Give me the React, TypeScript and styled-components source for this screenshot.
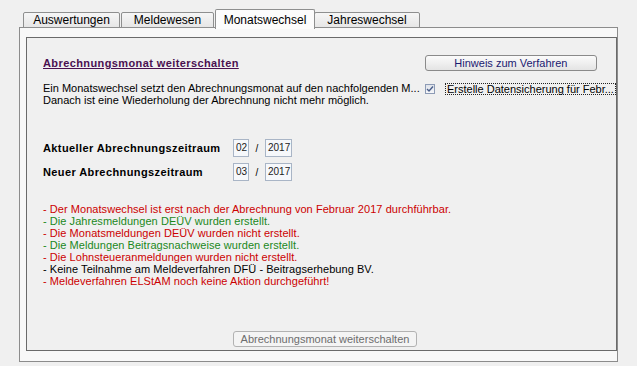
import React from "react";
import styled, { createGlobalStyle } from "styled-components";

const Global = createGlobalStyle`
  html, body { margin: 0; padding: 0; background: #f0f0f0; }
  body { font-family: "Liberation Sans", Arial, sans-serif; font-size: 11px; color: #000; }
`;

const Root = styled.div`
  width: 637px;
  height: 366px;
  box-sizing: border-box;
  padding: 10px 0 0 19px;
  background: #f0f0f0;
  overflow: hidden;
`;

const TabBar = styled.div`
  display: flex;
  align-items: flex-end;
  height: 18px;
  padding-left: 4px;
  margin-bottom: -1px;
  position: relative;
  z-index: 1;
`;

const Tab = styled.div<{ $active?: boolean; $w: number }>`
  box-sizing: border-box;
  width: ${(p) => p.$w}px;
  height: ${(p) => (p.$active ? 20 : 16)}px;
  margin: 0 ${(p) => (p.$active ? "-1px" : "1px")} ${(p) => (p.$active ? "-1px" : "0")} 0;
  border: 1px solid #8e8f8f;
  border-bottom: ${(p) => (p.$active ? "none" : "1px solid #8e8f8f")};
  border-radius: 2px 2px 0 0;
  background: ${(p) => (p.$active ? "#fcfcfc" : "linear-gradient(#f6f6f6, #e6e6e6)")};
  display: flex;
  justify-content: center;
  align-items: ${(p) => (p.$active ? "flex-start" : "center")};
  padding-top: ${(p) => (p.$active ? "3px" : "0")};
  font-size: 12px;
  color: #000;
  position: relative;
  z-index: ${(p) => (p.$active ? 2 : 1)};
`;

const Panel = styled.div`
  box-sizing: border-box;
  width: 599px;
  height: 335px;
  border: 1px solid #8c8c8c;
  background: #f8f8f8;
  padding: 9px 7px 10px 6px;
  display: flex;
`;

const Inner = styled.div`
  flex: 1;
  border: 1px solid #6a6a6a;
  background: #f0f0f0;
  display: flex;
  flex-direction: column;
  padding: 17px 0 0 16px;
  box-sizing: border-box;
`;

const HeaderRow = styled.div`
  display: flex;
  align-items: center;
  justify-content: space-between;
  padding-right: 11px;
  height: 16px;
`;

const Title = styled.span`
  font-weight: bold;
  font-size: 11px;
  letter-spacing: 0.4px;
  color: #4a1050;
  text-decoration: underline;
`;

const WinButton = styled.button<{ $w: number; $disabled?: boolean }>`
  box-sizing: border-box;
  width: ${(p) => p.$w}px;
  height: 16px;
  padding: 0;
  border: 1px solid ${(p) => (p.$disabled ? "#b2b2b2" : "#8a8a8a")};
  border-radius: 3px;
  background: ${(p) => (p.$disabled ? "#f4f4f4" : "linear-gradient(#fbfbfb, #e4e4e4)")};
  font-family: "Liberation Sans", Arial, sans-serif;
  font-size: 11px;
  color: ${(p) => (p.$disabled ? "#6d6d6d" : "#1a1a70")};
  line-height: 14px;
  text-align: center;
`;

const HeaderButton = styled(WinButton)`
  margin-right: 8px;
`;

const DescRow = styled.div`
  display: flex;
  margin-top: 11px;
`;

const DescText = styled.div`
  width: 382px;
  line-height: 12px;
  font-size: 11px;
  white-space: nowrap;
`;

const CheckWrap = styled.div`
  display: flex;
  align-items: flex-start;
  padding-top: 1px;
`;

const CheckBox = styled.span`
  box-sizing: border-box;
  width: 10px;
  height: 10px;
  margin-top: 1px;
  border: 1px solid #8d9bb5;
  background: linear-gradient(#dfe3ea, #f6f7f9);
  display: flex;
  align-items: center;
  justify-content: center;
`;

const CheckLabel = styled.span`
  margin-left: 10px;
  border: 1px dotted #222;
  padding: 0 1px;
  line-height: 10px;
  white-space: nowrap;
  font-size: 11px;
`;

const PeriodBlock = styled.div`
  display: flex;
  flex-direction: column;
  gap: 6px;
  margin-top: 33px;
`;

const PeriodRow = styled.div`
  display: flex;
  align-items: center;
  height: 18px;
`;

const PeriodLabel = styled.span`
  width: 190px;
  font-weight: bold;
  font-size: 11px;
  letter-spacing: 0.4px;
`;

const Field = styled.span<{ $w: number }>`
  box-sizing: border-box;
  width: ${(p) => p.$w}px;
  height: 18px;
  border: 1px solid #a9b5c6;
  background: #f6f8fb;
  font-size: 10px;
  line-height: 16px;
  padding-left: 2px;
  color: #222;
`;

const Slash = styled.span`
  width: 16px;
  text-align: center;
  font-size: 10px;
`;

const Messages = styled.div`
  margin-top: 22px;
  display: flex;
  flex-direction: column;
`;

const Msg = styled.div<{ $c: string }>`
  color: ${(p) => p.$c};
  font-size: 11px;
  line-height: 12px;
  letter-spacing: 0.05px;
  white-space: nowrap;
`;

const Footer = styled.div`
  margin-top: auto;
  padding: 0 0 3px 190px;
`;

const RED = "#cc0000";
const GREEN = "#1b881b";

const messages: [string, string][] = [
  ["- Der Monatswechsel ist erst nach der Abrechnung von Februar 2017 durchführbar.", RED],
  ["- Die Jahresmeldungen DEÜV wurden erstellt.", GREEN],
  ["- Die Monatsmeldungen DEÜV wurden nicht erstellt.", RED],
  ["- Die Meldungen Beitragsnachweise wurden erstellt.", GREEN],
  ["- Die Lohnsteueranmeldungen wurden nicht erstellt.", RED],
  ["- Keine Teilnahme am Meldeverfahren DFÜ - Beitragserhebung BV.", "#000"],
  ["- Meldeverfahren ELStAM noch keine Aktion durchgeführt!", RED],
];

export default function App() {
  return (
    <Root>
      <Global />
      <TabBar>
        <Tab $w={97}>Auswertungen</Tab>
        <Tab $w={93}>Meldewesen</Tab>
        <Tab $w={100} $active>Monatswechsel</Tab>
        <Tab $w={106}>Jahreswechsel</Tab>
      </TabBar>
      <Panel>
        <Inner>
          <HeaderRow>
            <Title>Abrechnungsmonat weiterschalten</Title>
            <HeaderButton $w={172}>Hinweis zum Verfahren</HeaderButton>
          </HeaderRow>
          <DescRow>
            <DescText>
              Ein Monatswechsel setzt den Abrechnungsmonat auf den nachfolgenden M...
              <br />
              Danach ist eine Wiederholung der Abrechnung nicht mehr möglich.
            </DescText>
            <CheckWrap>
              <CheckBox>
                <svg width="8" height="8" viewBox="0 0 8 8">
                  <path d="M1 4 L3 6 L7 1.5" fill="none" stroke="#4a5e8a" strokeWidth="1.4" />
                </svg>
              </CheckBox>
              <CheckLabel>Erstelle Datensicherung für Febr...</CheckLabel>
            </CheckWrap>
          </DescRow>
          <PeriodBlock>
            <PeriodRow>
              <PeriodLabel>Aktueller Abrechnungszeitraum</PeriodLabel>
              <Field $w={16}>02</Field>
              <Slash>/</Slash>
              <Field $w={27}>2017</Field>
            </PeriodRow>
            <PeriodRow>
              <PeriodLabel>Neuer Abrechnungszeitraum</PeriodLabel>
              <Field $w={16}>03</Field>
              <Slash>/</Slash>
              <Field $w={27}>2017</Field>
            </PeriodRow>
          </PeriodBlock>
          <Messages>
            {messages.map(([t, c]) => (
              <Msg key={t} $c={c}>{t}</Msg>
            ))}
          </Messages>
          <Footer>
            <WinButton $w={184} $disabled disabled>
              Abrechnungsmonat weiterschalten
            </WinButton>
          </Footer>
        </Inner>
      </Panel>
    </Root>
  );
}
